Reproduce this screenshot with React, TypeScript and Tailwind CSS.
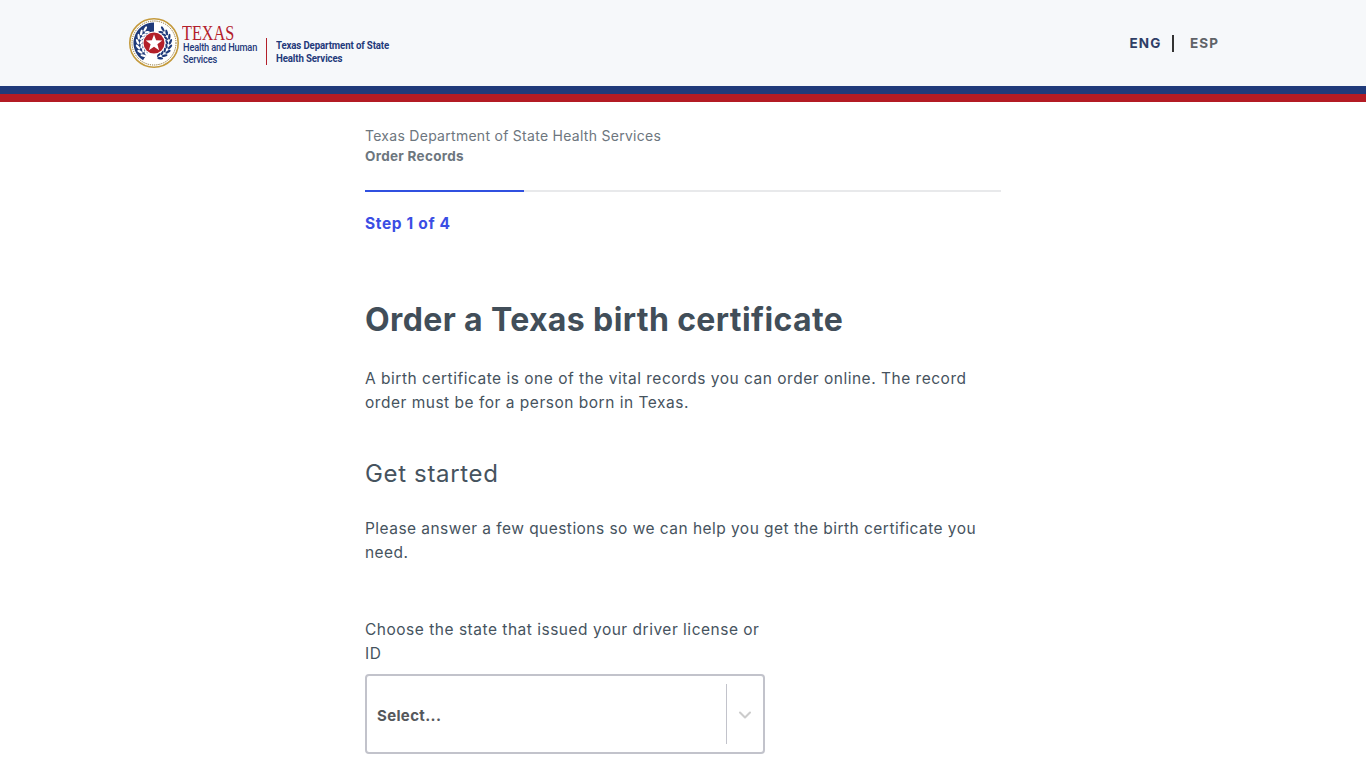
import { ChevronDown } from "lucide-react";

const font = "font-['Inter','Open_Sans',sans-serif]";

// wreath leaves, angle measured from the bottom of the seal up each side
const leafAngles = [22, 40, 58, 76, 94, 112, 130, 148];

function Seal() {
  return (
    <svg width="50" height="50" viewBox="0 0 50 50" className="shrink-0">
      <circle cx="25" cy="25" r="24.200" fill="#fff" stroke="#c49a3c" strokeWidth="1.600" />
      <circle cx="25" cy="25" r="22" fill="none" stroke="#8a6d2b" strokeWidth="1" strokeDasharray="1.200 1" />
      <path d="M25 4.500a20.500 20.500 0 0 0-11 37.800L25 25z" fill="#1f3a7a" />
      {leafAngles.map((a) => (
        <g key={a}>
          <ellipse cx="25" cy="8.500" rx="3" ry="1.200" fill="#fff" transform={`rotate(${180 + a} 25 25) rotate(-28 25 8.500)`} />
          <ellipse cx="25" cy="12.200" rx="2.600" ry="1.100" fill="#fff" transform={`rotate(${180 + a} 25 25) rotate(28 25 12.200)`} />
          <ellipse cx="25" cy="8.500" rx="3" ry="1.200" fill="#1f3a7a" transform={`rotate(${180 - a} 25 25) rotate(28 25 8.500)`} />
          <ellipse cx="25" cy="12.200" rx="2.600" ry="1.100" fill="#1f3a7a" transform={`rotate(${180 - a} 25 25) rotate(-28 25 12.200)`} />
        </g>
      ))}
      <circle cx="25" cy="25" r="11.500" fill="#fff" />
      <circle cx="25" cy="25" r="10.500" fill="#b3202a" />
      <path d="M25 16.500l2.100 5.800 6.100.2-4.800 3.800 1.700 5.900-5.100-3.400-5.100 3.400 1.700-5.900-4.800-3.800 6.100-.2z" fill="#fff" />
    </svg>
  );
}

function Logo() {
  return (
    <div className="flex items-start">
      <Seal />
      <div className="ml-[4px] mt-[7px] flex w-[74px] flex-col whitespace-nowrap">
        <span className="ml-[-1px] origin-left scale-x-[0.81] font-['Liberation_Serif',serif] text-[20px] leading-[17px] text-[#b3202a]">TEXAS</span>
        <span className="origin-left scale-x-[0.84] font-['Roboto',sans-serif] text-[11px] font-medium leading-[12px] tracking-[-0.200px] text-[#1f3a7a]">Health and Human</span>
        <span className="origin-left scale-x-[0.84] font-['Roboto',sans-serif] text-[11px] font-medium leading-[12px] tracking-[-0.200px] text-[#1f3a7a]">Services</span>
      </div>
      <div className="ml-[9px] mt-[20px] h-[27px] w-px bg-[#b3202a]" />
      <div className="ml-[9px] mt-[21px] flex w-[113px] flex-col whitespace-nowrap font-['Roboto',sans-serif] text-[11.500px] font-bold leading-[13px] tracking-[-0.150px] text-[#1f3a7a]">
        <span className="origin-left scale-x-[0.84]">Texas Department of State</span>
        <span className="origin-left scale-x-[0.84]">Health Services</span>
      </div>
    </div>
  );
}

export default function App() {
  return (
    <div className={`${font} min-h-[768px] bg-white text-[#46535e]`}>
      <header className="h-[102px]">
        <div className="flex h-[86px] items-center justify-between bg-[#f6f8fa] pl-[129px] pr-[147px]">
          <Logo />
          <div className="flex items-center text-[13.500px] font-bold tracking-[1.100px]">
            <span className="text-[#2f3e66]">ENG</span>
            <span className="ml-[11px] mr-[16px] h-[17px] w-[1.500px] bg-[#333]" />
            <span className="text-[#5f6368]">ESP</span>
          </div>
        </div>
        <div className="h-[8px] bg-[#1f3a7a]" />
        <div className="h-[8px] bg-[#b31b24]" />
      </header>

      <main className="ml-[365px] w-[636px] pt-[24px]">
        <p className="text-[14px] leading-[20px] tracking-[0.280px] text-[#6d767e]">Texas Department of State Health Services</p>
        <p className="text-[13.500px] font-bold leading-[20px] tracking-[0.300px] text-[#6d767e]">Order Records</p>

        <div className="mt-[24px] flex h-[2px] bg-[#e8e9eb]">
          <div className="w-[159px] bg-[#3050e0]" />
        </div>

        <p className="mt-[21px] text-[15.500px] font-bold leading-[22px] tracking-[0.650px] text-[#3a4de4]">Step 1 of 4</p>

        <h1 className="mt-[63px] text-[32px] font-bold leading-[44px] tracking-[0.380px] text-[#414e59]">Order a Texas birth certificate</h1>

        <p className="mt-[25px] w-[620px] text-[15.500px] leading-[24px] tracking-[0.510px]">
          A birth certificate is one of the vital records you can order online. The record order must be for a person born in Texas.
        </p>

        <h2 className="mt-[43px] text-[24px] font-normal leading-[32px] tracking-[0.650px]">Get started</h2>

        <p className="mt-[27px] w-[620px] text-[15.500px] leading-[24px] tracking-[0.460px]">
          Please answer a few questions so we can help you get the birth certificate you need.
        </p>

        <label className="mt-[53px] block w-[400px] text-[15.500px] leading-[24px] tracking-[0.510px]">
          Choose the state that issued your driver license or ID
        </label>

        <div className="mt-[8px] flex h-[80px] w-[400px] items-center rounded-[4px] border-2 border-[#c2c3cb] bg-white">
          <span className="ml-[10px] mt-[4px] flex-1 text-[15px] font-bold tracking-[0.350px] text-[#55585c]">Select...</span>
          <div className="h-[60px] w-px bg-[#c2c3cb]" />
          <div className="flex w-[36px] justify-center pt-[2px]">
            <ChevronDown size={20} strokeWidth={2.500} className="text-[#cccccc]" />
          </div>
        </div>
      </main>
    </div>
  );
}
